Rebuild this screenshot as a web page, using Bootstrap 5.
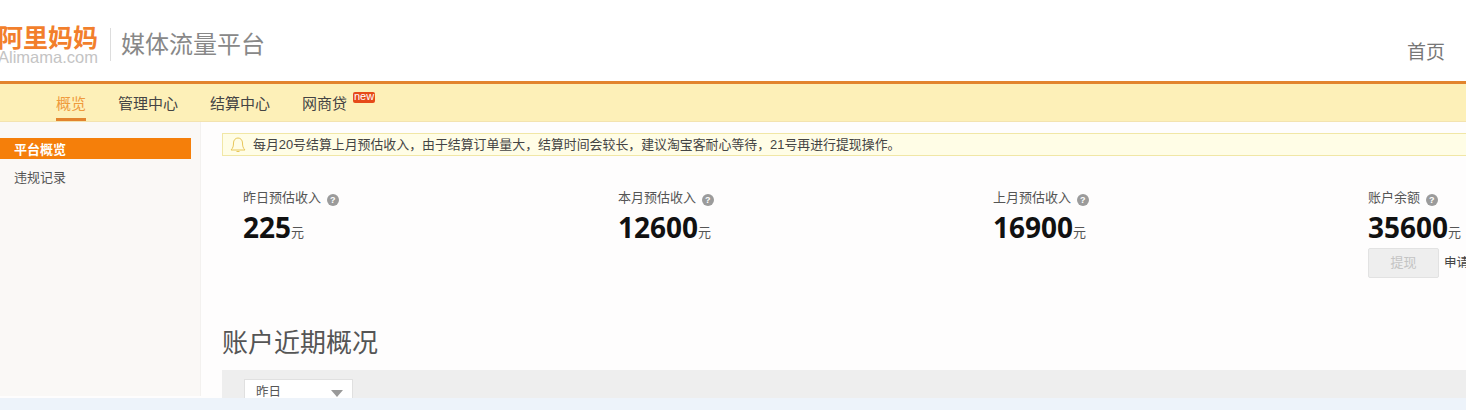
<!DOCTYPE html>
<html lang="zh-CN">
<head>
    <meta charset="UTF-8">
    <title>媒体流量平台</title>
    <link href="https://cdn.jsdelivr.net/npm/bootstrap@5.3.0/dist/css/bootstrap.min.css" rel="stylesheet">
    <style>
        html, body {
            height: 100%;
            margin: 0;
            overflow: hidden;
        }

        body {
            background-color: #edf3fa;
            font-family: "Liberation Sans", "Noto Sans CJK SC", sans-serif;
            font-size: 12px;
            color: #444;
        }

        .page-wrap {
            height: 398px;
            overflow: hidden;
            background-color: #fefdfd;
        }

        /* top header */
        .site-header {
            height: 81px;
            background-color: #fff;
            padding-right: 21px;
        }

        .logo-box {
            margin-left: -2px;
            width: 101px;
            padding-top: 26px;
        }

        .logo-cn {
            font-size: 25px;
            line-height: 24px;
            font-weight: 700;
            color: #f27f2c;
            white-space: nowrap;
        }

        .logo-en {
            font-size: 16.500px;
            line-height: 15px;
            color: #c4c4c4;
            white-space: nowrap;
        }

        .logo-line {
            width: 1px;
            height: 33px;
            margin: 28px 10px 0 11px;
            background-color: #ddd;
        }

        .site-title {
            padding-top: 29px;
            font-size: 24px;
            line-height: 32px;
            color: #888;
        }

        .home-link {
            padding-top: 39px;
            font-size: 19px;
            line-height: 27px;
            color: #777;
            text-decoration: none;
        }

        /* yellow menu */
        .menu-bar {
            height: 41px;
            padding-left: 56px;
            gap: 32px;
            background-color: #fdf0b8;
            border-top: 3px solid #e2842d;
            border-bottom: 1px solid #f3e3b0;
        }

        .menu-item {
            position: relative;
            height: 37px;
            padding-top: 9px;
            font-size: 15px;
            line-height: 21px;
            color: #444;
            text-decoration: none;
        }

        .menu-item.on {
            color: #ef9a3c;
            border-bottom: 3px solid #e2842d;
        }

        .new-tag {
            position: absolute;
            top: 8px;
            right: -28px;
            width: 22px;
            height: 11px;
            border-radius: 2px;
            background-color: #e64a19;
            color: #fff;
            font-size: 11px;
            line-height: 9px;
            text-align: center;
        }

        /* sidebar */
        .body-row {
            height: 274px;
        }

        .side-menu {
            width: 201px;
            flex: none;
            padding-top: 16px;
            background-color: #faf8f6;
            border-right: 1px solid #f3f1ef;
        }

        .side-item {
            display: block;
            width: 191px;
            height: 21px;
            margin-bottom: 7px;
            padding: 1px 0 0 14px;
            font-size: 13px;
            line-height: 21px;
            color: #555;
            text-decoration: none;
        }

        .side-item.on {
            background-color: #f57f0a;
            color: #fff;
            font-weight: 700;
        }

        /* main */
        .main-area {
            min-width: 0;
            flex: 1;
            padding: 11px 0 0 21px;
        }

        .notice-bar {
            width: 1300px;
            height: 23px;
            padding-left: 7px;
            background-color: #fffde6;
            border: 1px solid #f1e7a6;
            font-size: 12.900px;
            line-height: 21px;
            color: #444;
            white-space: nowrap;
        }

        .bell-icon {
            width: 16px;
            height: 17px;
            margin-right: 7px;
        }

        .stat-row {
            width: 1300px;
            padding: 33px 0 0 21px;
        }

        .stat-col {
            flex: none;
            width: 375px;
        }

        .stat-label {
            height: 20px;
            margin-top: -1px;
            font-size: 13px;
            line-height: 20px;
            color: #555;
            white-space: nowrap;
        }

        .help-dot {
            display: inline-block;
            width: 12px;
            height: 12px;
            margin-left: 2px;
            border-radius: 50%;
            background-color: #9b9b9b;
            color: #fff;
            font-size: 9px;
            font-weight: 700;
            line-height: 12px;
            text-align: center;
            vertical-align: -1px;
        }

        .stat-num {
            margin-top: 1px;
            height: 39px;
            font-family: "Open Sans", "Noto Sans CJK SC", sans-serif;
            font-size: 28px;
            line-height: 36px;
            font-weight: 700;
            color: #111;
            white-space: nowrap;
        }

        .stat-unit {
            font-size: 13px;
            font-weight: 400;
            color: #555;
            vertical-align: 1px;
        }

        .cash-btn {
            width: 71px;
            height: 30px;
            padding: 0;
            font-size: 13px;
            background-color: #eee;
            border: 1px solid #e2e2e2;
            border-radius: 2px;
            color: #c4c4c4;
        }

        .apply-text {
            margin-left: 5px;
            font-size: 12.500px;
            color: #444;
        }

        .section-title {
            margin: 49px 0 11px;
            font-size: 26px;
            line-height: 32px;
            font-weight: 400;
            color: #555;
        }

        .filter-box {
            width: 1300px;
            height: 40px;
            padding: 9px 0 0 22px;
            background-color: #eee;
        }

        .date-select {
            width: 109px;
            height: 32px;
            padding-left: 11px;
            background-color: #fff;
            border: 1px solid #e0e0e0;
            font-size: 12.500px;
            line-height: 24px;
            color: #555;
        }

        .select-arrow {
            width: 0;
            height: 0;
            margin: 10px 9px 0 0;
            border-top: 7px solid #999;
            border-left: 6px solid transparent;
            border-right: 6px solid transparent;
        }
    </style>
</head>
<body>

<div class="page-wrap">
    <!-- Header -->
    <header class="site-header d-flex">
        <div class="logo-box">
            <div class="logo-cn">阿里妈妈</div>
            <div class="logo-en">Alimama.com</div>
        </div>
        <div class="logo-line"></div>
        <div class="site-title">媒体流量平台</div>
        <a class="home-link ms-auto" href="#">首页</a>
    </header>

    <!-- Menu -->
    <nav class="menu-bar d-flex">
        <a class="menu-item on" href="#">概览</a>
        <a class="menu-item" href="#">管理中心</a>
        <a class="menu-item" href="#">结算中心</a>
        <a class="menu-item" href="#">网商贷<span class="new-tag">new</span></a>
    </nav>

    <div class="body-row d-flex">
        <!-- Sidebar -->
        <aside class="side-menu">
            <a class="side-item on" href="#">平台概览</a>
            <a class="side-item" href="#">违规记录</a>
        </aside>

        <!-- Content -->
        <main class="main-area">
            <div class="notice-bar d-flex align-items-center">
                <svg class="bell-icon" viewBox="0 0 16 17" fill="none" stroke="#e8c75a" stroke-width="1">
                    <path d="M1 14h14c-2-2-2.500-4-2.500-7C12.500 4 10.500 2 8 2S3.500 4 3.500 7c0 3-.5 5-2.500 7z"/>
                    <path d="M6.500 15.500h3"/>
                </svg>
                每月20号结算上月预估收入，由于结算订单量大，结算时间会较长，建议淘宝客耐心等待，21号再进行提现操作。
            </div>

            <div class="stat-row d-flex">
                <div class="stat-col">
                    <div class="stat-label">昨日预估收入 <span class="help-dot">?</span></div>
                    <div class="stat-num">225<span class="stat-unit">元</span></div>
                </div>
                <div class="stat-col">
                    <div class="stat-label">本月预估收入 <span class="help-dot">?</span></div>
                    <div class="stat-num">12600<span class="stat-unit">元</span></div>
                </div>
                <div class="stat-col">
                    <div class="stat-label">上月预估收入 <span class="help-dot">?</span></div>
                    <div class="stat-num">16900<span class="stat-unit">元</span></div>
                </div>
                <div class="stat-col">
                    <div class="stat-label">账户余额 <span class="help-dot">?</span></div>
                    <div class="stat-num">35600<span class="stat-unit">元</span></div>
                    <div class="d-flex align-items-center">
                        <button class="cash-btn" type="button" disabled>提现</button>
                        <span class="apply-text">申请</span>
                    </div>
                </div>
            </div>

            <h2 class="section-title">账户近期概况</h2>

            <div class="filter-box">
                <div class="date-select d-flex justify-content-between">
                    昨日
                    <span class="select-arrow"></span>
                </div>
            </div>
        </main>
    </div>
</div>

</body>
</html>
